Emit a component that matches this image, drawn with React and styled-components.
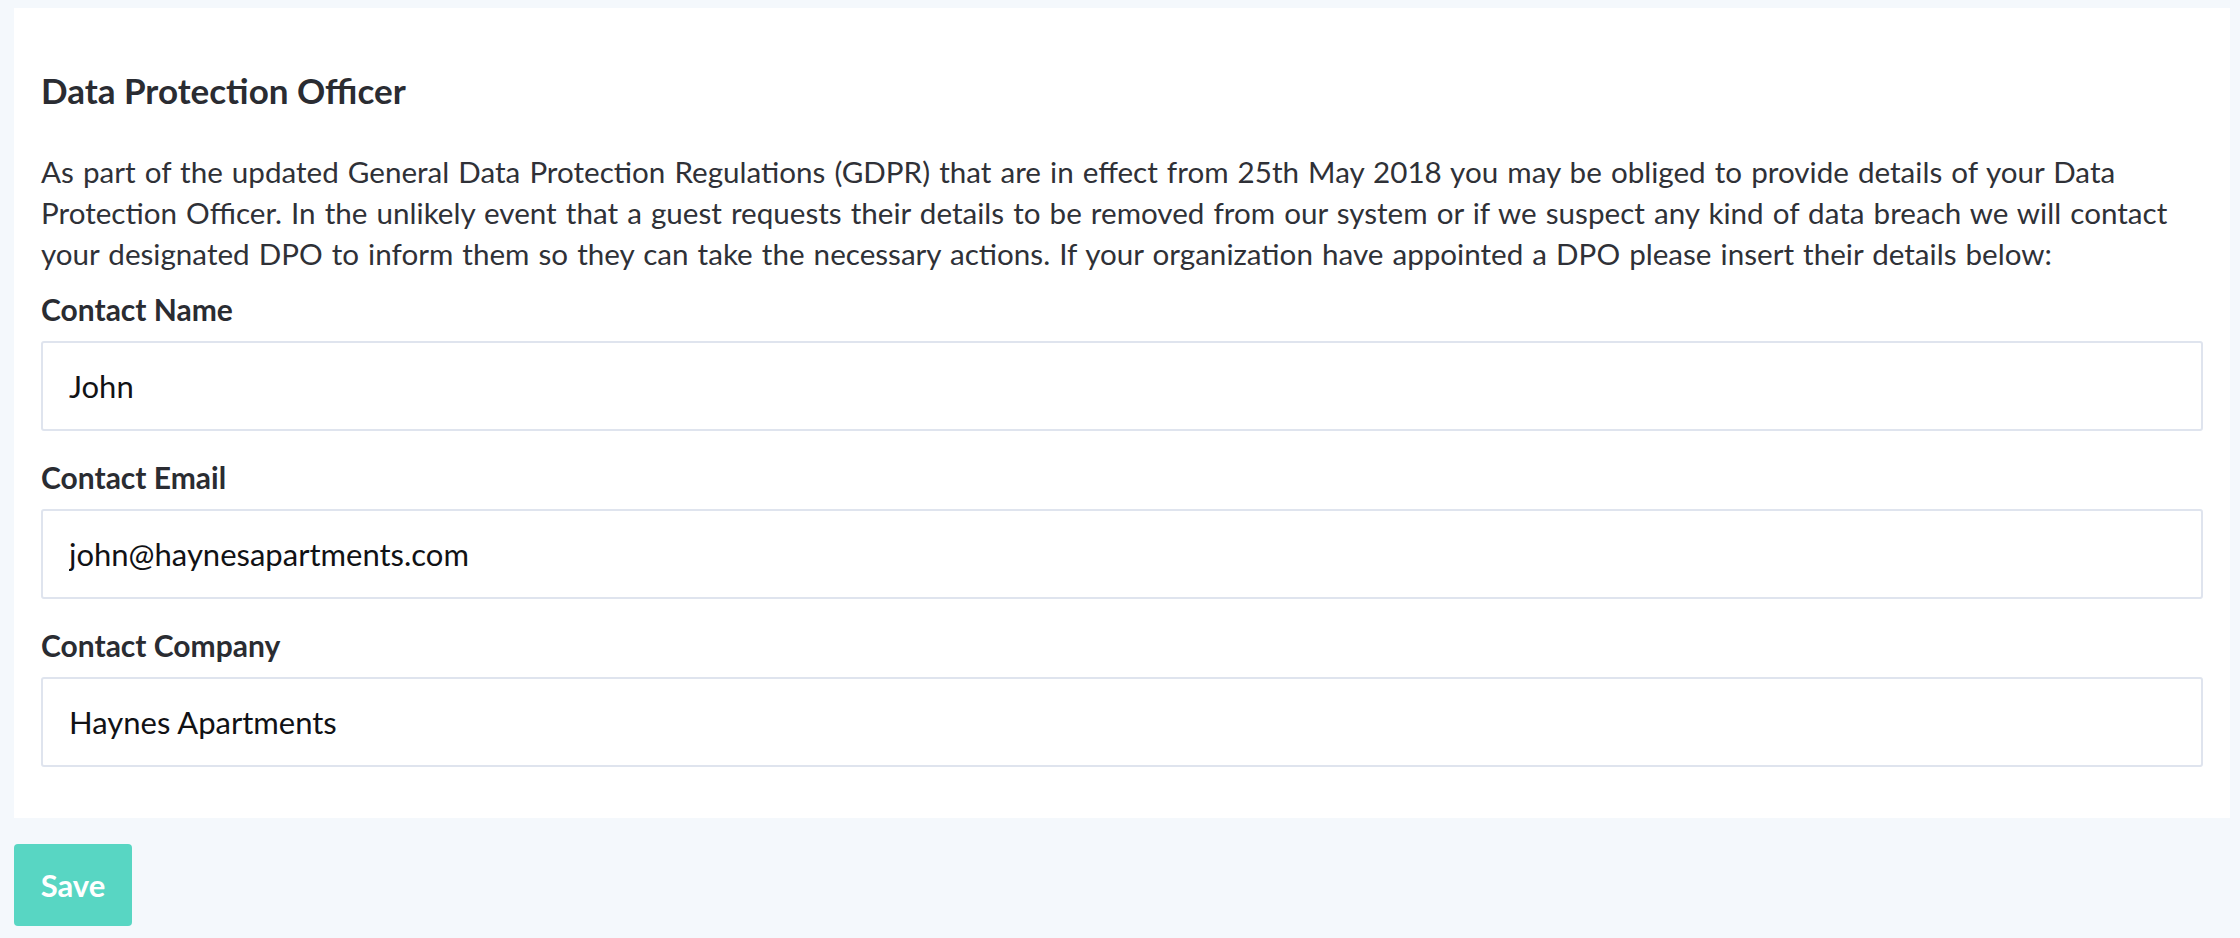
import React from 'react'
import styled, { createGlobalStyle } from 'styled-components'

const GlobalStyle = createGlobalStyle`
    html, body {
        margin: 0;
        padding: 0;
        background-color: #f4f8fc;
    }
    body {
        font-family: Lato, "Liberation Sans", sans-serif;
        color: #2b2d33;
    }
`

const fields = [
    { label: 'Contact Name', value: 'John' },
    { label: 'Contact Email', value: 'john@haynesapartments.com' },
    { label: 'Contact Company', value: 'Haynes Apartments' },
]

function App() {
    return (
        <Page>
            <GlobalStyle />
            <Card>
                <Title>Data Protection Officer</Title>
                <Intro>
                    As part of the updated General Data Protection Regulations (GDPR) that are in effect from 25th May 2018 you may be obliged to provide details of your Data Protection Officer. In the unlikely event that a guest requests their details to be removed from our system or if we suspect any kind of data breach we will contact your designated DPO to inform them so they can take the necessary actions. If your organization have appointed a DPO please insert their details below:
                </Intro>
                {fields.map((f) => (
                    <Field key={f.label}>
                        <Label>{f.label}</Label>
                        <Input type="text" defaultValue={f.value} />
                    </Field>
                ))}
            </Card>
            <SaveButton>Save</SaveButton>
        </Page>
    )
}

export default App

const Page = styled.div`
    min-height: 938px;
    box-sizing: border-box;
    padding: 8px 10px 0 14px;
`
const Card = styled.div`
    background-color: #ffffff;
    padding: 62px 27px 51px 27px;
    display: flex;
    flex-direction: column;
`
const Title = styled.h2`
    margin: 0;
    font-size: 35px;
    line-height: 40px;
    font-weight: 700;
    color: #2a2c32;
`
const Intro = styled.p`
    margin: 41px 0 0 0;
    font-size: 29.6px;
    line-height: 41px;
    word-spacing: 1.5px;
    color: #2f3137;
`
const Field = styled.div`
    display: flex;
    flex-direction: column;
    margin-top: 15px;
    & + & {
        margin-top: 26px;
    }
`
const Label = styled.label`
    font-size: 30px;
    line-height: 41px;
    font-weight: 700;
    color: #2a2c32;
    margin-bottom: 11px;
`
const Input = styled.input`
    box-sizing: border-box;
    height: 90px;
    width: 100%;
    border: 2px solid #dfe4ee;
    border-radius: 3px;
    padding: 0 26px;
    font-family: Lato, "Liberation Sans", sans-serif;
    font-size: 31px;
    color: #111215;
    background: #ffffff;
    outline: none;
`
const SaveButton = styled.button`
    margin-top: 26px;
    width: 118px;
    height: 82px;
    border: 0;
    border-radius: 4px;
    background-color: #58d6c3;
    color: #ffffff;
    font-family: Lato, "Liberation Sans", sans-serif;
    font-size: 31px;
    font-weight: 700;
    cursor: pointer;
`
